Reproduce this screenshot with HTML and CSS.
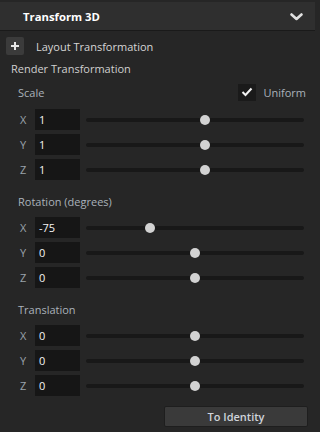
FILE: index.html
```html
<!DOCTYPE html>
<html>
<head>
<meta charset="utf-8">
<link rel="stylesheet" href="styles.css">
</head>
<body>
<div class="panel">
  <div class="header">
    <span class="title">Transform 3D</span>
    <svg class="chevron" width="13" height="8" viewBox="0 0 13 8"><polyline points="1.5,1.5 6.5,6 11.5,1.5" fill="none" stroke="#e0e0e0" stroke-width="2.6" stroke-linecap="round" stroke-linejoin="round"/></svg>
  </div>

  <div class="layout-row">
    <span class="plus-btn"><svg width="10" height="10" viewBox="0 0 10 10"><path d="M5 1V9M1 5H9" stroke="#e6e6e6" stroke-width="2"/></svg></span>
    <span class="layout-label">Layout Transformation</span>
  </div>

  <div class="render-label">Render Transformation</div>

  <div class="section first">
    <div class="section-head">
      <span class="section-label">Scale</span>
      <span class="uniform">
        <span class="checkbox"><svg width="12" height="10" viewBox="0 0 12 10"><polyline points="1.5,5 4.5,8 10.5,1.5" fill="none" stroke="#f2f2f2" stroke-width="2"/></svg></span>
        <span class="uniform-label">Uniform</span>
      </span>
    </div>
    <div class="rows">
      <div class="row"><span class="axis">X</span><span class="num">1</span><div class="slider"><span class="thumb" style="left:54.8%"></span></div></div>
      <div class="row"><span class="axis">Y</span><span class="num">1</span><div class="slider"><span class="thumb" style="left:54.8%"></span></div></div>
      <div class="row"><span class="axis">Z</span><span class="num">1</span><div class="slider"><span class="thumb" style="left:54.8%"></span></div></div>
    </div>
  </div>

  <div class="section">
    <div class="section-head"><span class="section-label">Rotation (degrees)</span></div>
    <div class="rows">
      <div class="row"><span class="axis">X</span><span class="num">-75</span><div class="slider"><span class="thumb" style="left:29.2%"></span></div></div>
      <div class="row"><span class="axis">Y</span><span class="num">0</span><div class="slider"><span class="thumb" style="left:50%"></span></div></div>
      <div class="row"><span class="axis">Z</span><span class="num">0</span><div class="slider"><span class="thumb" style="left:50%"></span></div></div>
    </div>
  </div>

  <div class="section">
    <div class="section-head"><span class="section-label">Translation</span></div>
    <div class="rows">
      <div class="row"><span class="axis">X</span><span class="num">0</span><div class="slider"><span class="thumb" style="left:50%"></span></div></div>
      <div class="row"><span class="axis">Y</span><span class="num">0</span><div class="slider"><span class="thumb" style="left:50%"></span></div></div>
      <div class="row"><span class="axis">Z</span><span class="num">0</span><div class="slider"><span class="thumb" style="left:50%"></span></div></div>
    </div>
  </div>

  <div class="footer">
    <button class="identity-btn">To Identity</button>
  </div>
</div>
</body>
</html>
```

FILE: styles.css
```css
* { box-sizing: border-box; }

html, body {
  margin: 0;
  padding: 0;
  background: #262626;
}

body {
  font-family: "Open Sans", "Noto Sans", sans-serif;
  font-size: 11px;
  color: #d4d4d4;
  height: 432px;
  overflow: hidden;
}

.panel {
  width: 315px;
  display: flex;
  flex-direction: column;
}

.header {
  margin-top: 2px;
  height: 29px;
  background: #2f2f2f;
  border-bottom: 1px solid #1a1a1a;
  display: flex;
  align-items: center;
  justify-content: space-between;
  padding: 0 12px 0 23px;
}

.title {
  font-weight: 700;
  font-size: 11.3px;
  color: #ffffff;
}

.chevron { display: block; margin-top: 1px; }

.layout-row {
  margin-top: 6px;
  padding-left: 6px;
  height: 18px;
  display: flex;
  align-items: center;
  gap: 12px;
}

.plus-btn {
  width: 18px;
  height: 18px;
  background: #3b3b3b;
  border-radius: 2px;
  display: flex;
  align-items: center;
  justify-content: center;
}

.layout-label { color: #d6d6d6; }

.render-label {
  margin-top: 6px;
  padding-left: 11px;
  height: 16px;
  line-height: 16px;
  color: #d0d0d0;
}

.section {
  margin-top: 13px;
  padding-left: 18px;
  padding-right: 11px;
}

.section.first { margin-top: 6px; }

.section-head {
  height: 16px;
  display: flex;
  align-items: center;
  justify-content: space-between;
}

.section.first .section-head { height: 18px; }

.section-label { color: #aab2ba; }

.uniform {
  display: flex;
  align-items: center;
  gap: 7px;
  margin-right: -2px;
}

.checkbox {
  width: 18px;
  height: 17px;
  background: #1a1a1a;
  display: flex;
  align-items: center;
  justify-content: center;
}

.uniform-label { color: #aab2ba; }

.rows {
  margin-top: 8px;
  display: flex;
  flex-direction: column;
  gap: 4px;
}

.row {
  height: 21px;
  display: flex;
  align-items: center;
}

.axis {
  width: 17px;
  padding-left: 2px;
  color: #9aa3ab;
}

.num {
  width: 45px;
  height: 21px;
  background: #161616;
  color: #f4f4f4;
  padding-left: 4px;
  line-height: 21px;
}

.slider {
  position: relative;
  flex: 1;
  margin-left: 6px;
  height: 4px;
  border-radius: 2px;
  background: #181818;
}

.thumb {
  position: absolute;
  top: 50%;
  width: 10px;
  height: 10px;
  border-radius: 50%;
  background: #d2d2d2;
  margin-left: -5px;
  margin-top: -5px;
}

.footer {
  margin-top: 10px;
  display: flex;
  justify-content: flex-end;
  padding-right: 7px;
}

.identity-btn {
  width: 144px;
  height: 21px;
  background: #3a3a3a;
  border: 1px solid #1e1e1e;
  border-radius: 2px;
  color: #cfd4da;
  font-family: "Open Sans", "Noto Sans", sans-serif;
  font-size: 11px;
  font-weight: 600;
  padding: 0;
}
```
